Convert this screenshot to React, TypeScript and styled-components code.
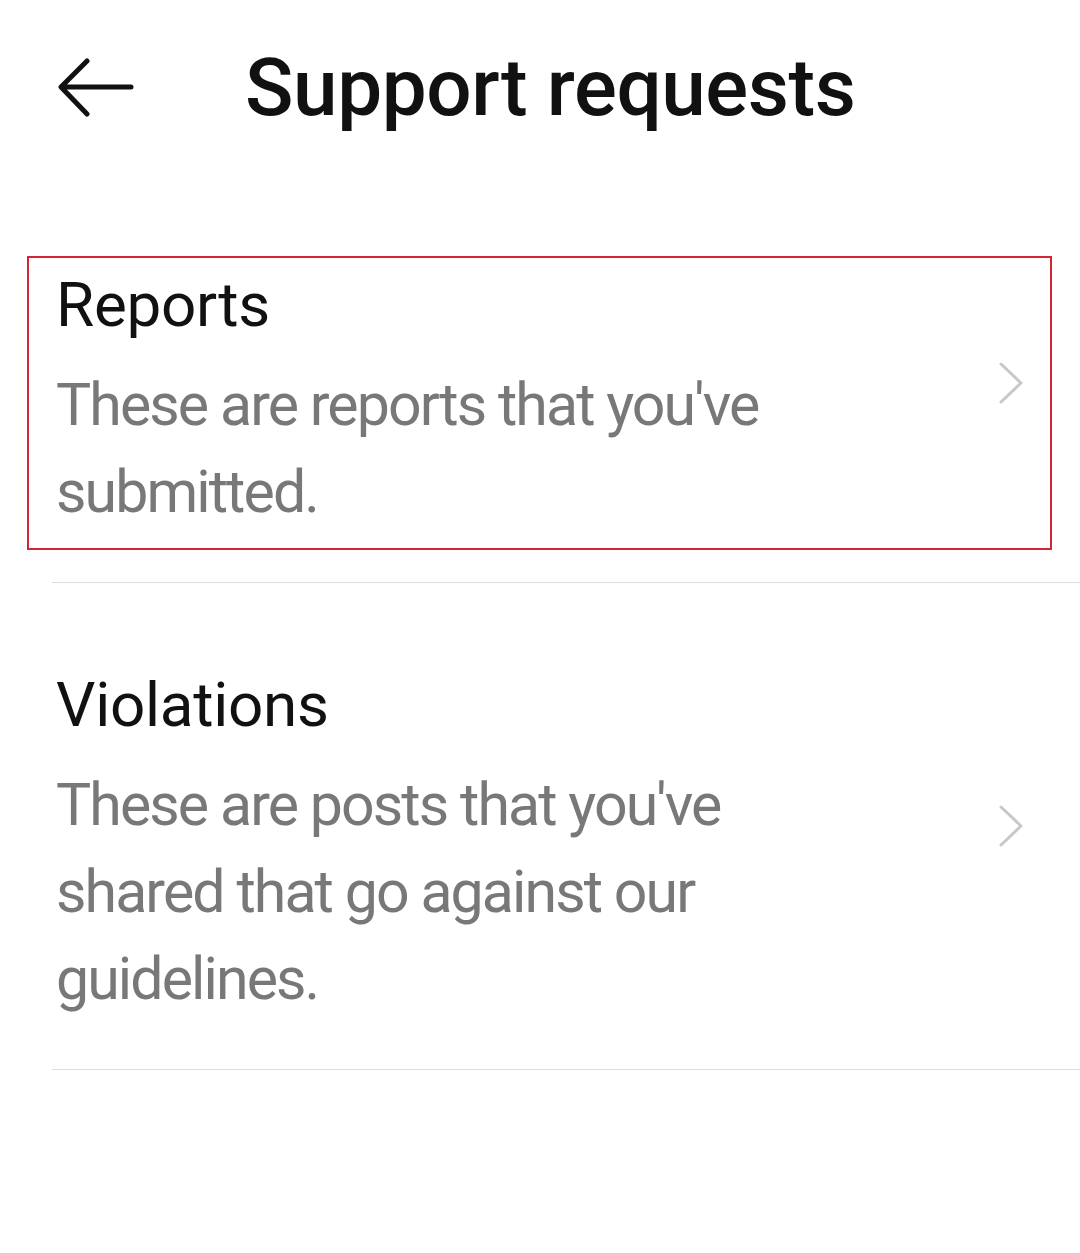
import * as React from 'react';
import styled, { createGlobalStyle } from 'styled-components';

const GlobalStyle = createGlobalStyle`
  html, body {
    margin: 0;
    padding: 0;
    background: #ffffff;
  }
  body {
    font-family: Roboto, "Noto Sans", Arial, sans-serif;
  }
`;

const Page = styled.div`
  width: 1080px;
  min-height: 1253px;
  background: #ffffff;
  display: flex;
  flex-direction: column;
`;

const Header = styled.header`
  display: flex;
  align-items: center;
  padding: 40px 0 0 56px;
  height: 96px;
`;

const BackButton = styled.button`
  width: 80px;
  height: 60px;
  padding: 0;
  border: none;
  background: none;
  display: flex;
  align-items: center;
  margin-right: 109px;
`;

const Title = styled.h1`
  margin: 0;
  font-size: 80px;
  line-height: 96px;
  font-weight: 500;
  color: #111111;
  letter-spacing: -0.4px;
`;

const List = styled.div`
  display: flex;
  flex-direction: column;
  margin-top: 120px;
`;

interface IItemProps {
  highlighted?: boolean;
}

const Item = styled.div<IItemProps>`
  display: flex;
  align-items: center;
  margin: 0 28px 0 27px;
  padding: 10px 26px 13px 27px;
  border: 2px solid ${props => props.highlighted ? '#d42535' : 'transparent'};
`;

const ItemText = styled.div`
  flex: 1;
  display: flex;
  flex-direction: column;
`;

const ItemTitle = styled.div`
  font-size: 62px;
  line-height: 74px;
  color: #111111;
  margin-bottom: 19px;
  letter-spacing: -0.3px;
`;

const ItemDescription = styled.div`
  font-size: 59px;
  line-height: 87px;
  color: #787878;
  letter-spacing: -1.9px;
  max-width: 740px;
`;

const Chevron = styled.svg`
  width: 26px;
  height: 44px;
  margin-bottom: 38px;
  flex-shrink: 0;
`;

interface IDividerProps {
  gapAfter?: number;
}

const Divider = styled.div<IDividerProps>`
  height: 1px;
  background: #dedede;
  margin: 32px 0 ${props => props.gapAfter ?? 0}px 52px;
`;

const ArrowLeft = () => (
  <svg width="80" height="60" viewBox="0 0 80 60">
    <path
      d="M75 29 H6 M31 3 L5 29 L31 56"
      fill="none"
      stroke="#111111"
      strokeWidth="5"
      strokeLinecap="round"
      strokeLinejoin="round"
    />
  </svg>
);

const ChevronRight = () => (
  <Chevron viewBox="0 0 26 44">
    <path
      d="M3 3 L23 22 L3 41"
      fill="none"
      stroke="#c8c8c8"
      strokeWidth="3"
      strokeLinecap="round"
      strokeLinejoin="round"
    />
  </Chevron>
);

const items = [
  {
    title: 'Reports',
    description: "These are reports that you've submitted.",
    highlighted: true,
  },
  {
    title: 'Violations',
    description: "These are posts that you've shared that go against our guidelines.",
    highlighted: false,
  },
];

export default class App extends React.Component {
  public render() {
    return (
      <Page>
        <GlobalStyle />
        <Header>
          <BackButton aria-label="Back">
            <ArrowLeft />
          </BackButton>
          <Title>Support requests</Title>
        </Header>
        <List>
          {items.map((item, i) => (
            <React.Fragment key={item.title}>
              <Item highlighted={item.highlighted}>
                <ItemText>
                  <ItemTitle>{item.title}</ItemTitle>
                  <ItemDescription>{item.description}</ItemDescription>
                </ItemText>
                <ChevronRight />
              </Item>
              <Divider gapAfter={i < items.length - 1 ? 73 : 0} />
            </React.Fragment>
          ))}
        </List>
      </Page>
    );
  }
}
